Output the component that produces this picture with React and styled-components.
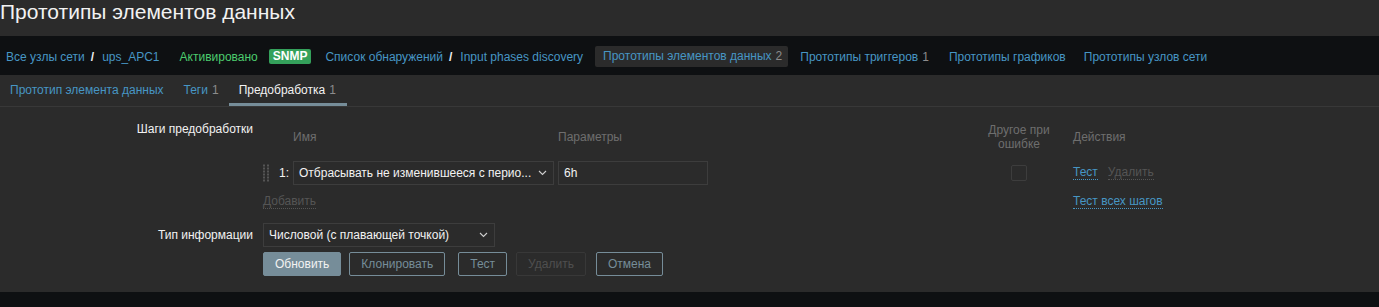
import React from "react";
import styled, { createGlobalStyle } from "styled-components";

const Global = createGlobalStyle`
  html, body { margin: 0; padding: 0; background: #0e1012; }
  body { font-family: "Liberation Sans", Arial, sans-serif; font-size: 12px; color: #f2f2f2; }
  * { box-sizing: border-box; }
`;

const Page = styled.div`
  width: 1379px;
  height: 307px;
  background: #0e1012;
`;

const Header = styled.div`
  height: 36px;
  background: #2b2b2b;
  display: flex;
  align-items: center;
`;

const Title = styled.h1`
  margin: 0;
  font-weight: normal;
  font-size: 21px;
  color: #f2f2f2;
  line-height: 24px;
  margin-top: -12px;
`;

const Nav = styled.div`
  height: 39px;
  background: #0e1012;
  display: flex;
  align-items: center;
  padding: 2px 0 0 6px;
`;

const NavLink = styled.span`
  color: #4796c4;
  margin-right: ${(p) => p.$mr ?? 20}px;
  white-space: nowrap;
  ${(p) =>
    p.$active &&
    `
    background: #2b2b2b;
    padding: 0 6px 0 8px;
    height: 21px;
    line-height: 21px;
    border-radius: 2px;
    margin-left: -8px;
  `}
`;

const Sep = styled.span`
  color: #f2f2f2;
  font-weight: bold;
  margin-right: 8px;
`;

const Status = styled.span`
  color: #4ccc6e;
  margin-right: 11px;
`;

const Badge = styled.span`
  background: #34a15b;
  color: #fff;
  font-weight: bold;
  padding: 1px 4px;
  border-radius: 2px;
  line-height: 13px;
  margin-right: 14px;
`;

const Count = styled.span`
  color: #8c8c8c;
  margin-left: 4px;
`;

const Tabs = styled.div`
  height: 32px;
  background: #2b2b2b;
  display: flex;
  border-bottom: 1px solid #383838;
`;

const Tab = styled.div`
  display: flex;
  align-items: center;
  color: ${(p) => (p.$active ? "#f2f2f2" : "#4796c4")};
  border-bottom: 3px solid ${(p) => (p.$active ? "#768d99" : "transparent")};
  padding-top: 2px;
  padding-left: 10px;
  padding-right: ${(p) => p.$pr ?? 10}px;
`;

const Form = styled.div`
  background: #2b2b2b;
  padding: 15px 0 16px;
  display: grid;
  grid-template-columns: 253px 1fr;
  column-gap: 10px;
`;

const Label = styled.div`
  text-align: right;
  color: #f2f2f2;
  line-height: 14px;
  align-self: ${(p) => p.$align ?? "start"};
  margin-top: ${(p) => p.$mt ?? 0}px;
`;

const StepsGrid = styled.div`
  display: grid;
  grid-template-columns: 30px 265px 150px 277px 68px 20px auto;
  align-items: center;
`;

const Th = styled.div`
  color: #6e6e6e;
  line-height: 14px;
  height: 30px;
  display: flex;
  align-items: center;
  justify-content: ${(p) => (p.$center ? "center" : "flex-start")};
  text-align: ${(p) => (p.$center ? "center" : "left")};
  grid-column: ${(p) => p.$col};
`;

const RowCell = styled.div`
  height: 24px;
  margin-top: 9px;
  display: flex;
  align-items: center;
  grid-column: ${(p) => p.$col};
  justify-content: ${(p) => (p.$center ? "center" : "flex-start")};
`;

const Handle = styled.svg`
  width: 6px;
  height: 18px;
  margin-right: 10px;
`;

const Num = styled.span`
  color: #f2f2f2;
`;

const Select = styled.div`
  width: ${(p) => p.$w}px;
  height: 24px;
  border: 1px solid #3d3d3d;
  background: #2b2b2b;
  display: flex;
  align-items: center;
  padding: 0 6px 0 5px;
  color: #f2f2f2;
  gap: 5px;
`;

const SelectText = styled.span`
  flex: 1;
  min-width: 0;
  white-space: nowrap;
`;

const Input = styled.div`
  width: 150px;
  height: 24px;
  border: 1px solid #3d3d3d;
  display: flex;
  align-items: center;
  padding: 0 5px;
  color: #f2f2f2;
`;

const Checkbox = styled.div`
  width: 16px;
  height: 16px;
  border: 1px solid #3d3d3d;
  border-radius: 2px;
`;

const LinkBtn = styled.span`
  color: ${(p) => (p.$disabled ? "#555555" : "#4796c4")};
  border-bottom: 1px dotted ${(p) => (p.$disabled ? "#555555" : "#4796c4")};
  line-height: 13px;
  margin-right: ${(p) => p.$mr ?? 0}px;
`;

const AddRow = styled.div`
  grid-column: ${(p) => p.$col};
  margin-top: 9px;
  height: 16px;
  display: flex;
  align-items: center;
`;

const TypeRow = styled.div`
  margin-top: 13px;
  display: flex;
  align-items: center;
`;

const Buttons = styled.div`
  display: flex;
  margin-top: 5px;
`;

const Button = styled.button`
  font-family: inherit;
  font-size: 12px;
  height: 24px;
  padding: 0 11px;
  border-radius: 2px;
  margin-right: ${(p) => p.$mr ?? 8}px;
  cursor: pointer;
  ${(p) =>
    p.$primary
      ? `background: #768d99; border: 1px solid #768d99; color: #f2f2f2;`
      : p.$disabled
      ? `background: transparent; border: 1px solid #383838; color: #4f4f4f;`
      : `background: transparent; border: 1px solid #768d99; color: #768d99;`}
`;

const Chevron = () => (
  <svg width="9" height="6" viewBox="0 0 9 6">
    <path d="M1 1l3.5 3.5L8 1" fill="none" stroke="#cfcfcf" strokeWidth="1.1" />
  </svg>
);

const DragDots = () => (
  <Handle viewBox="0 0 6 18">
    {[0, 1, 2, 3, 4, 5].map((r) =>
      [0, 1].map((c) => (
        <rect key={`${r}-${c}`} x={c * 4} y={r * 3 + 0.5} width="2" height="2" fill="#555555" />
      ))
    )}
  </Handle>
);

export default function App() {
  return (
    <Page>
      <Global />
      <Header>
        <Title>Прототипы элементов данных</Title>
      </Header>
      <Nav>
        <NavLink $mr={6}>Все узлы сети</NavLink>
        <Sep>/</Sep>
        <NavLink>ups_APC1</NavLink>
        <Status>Активировано</Status>
        <Badge>SNMP</Badge>
        <NavLink $mr={6}>Список обнаружений</NavLink>
        <Sep>/</Sep>
        <NavLink>Input phases discovery</NavLink>
        <NavLink $active $mr={12}>
          Прототипы элементов данных<Count>2</Count>
        </NavLink>
        <NavLink>
          Прототипы триггеров<Count>1</Count>
        </NavLink>
        <NavLink $mr={18}>Прототипы графиков</NavLink>
        <NavLink>Прототипы узлов сети</NavLink>
      </Nav>
      <Tabs>
        <Tab>Прототип элемента данных</Tab>
        <Tab>
          Теги<Count>1</Count>
        </Tab>
        <Tab $active $pr={11}>
          Предобработка<Count>1</Count>
        </Tab>
      </Tabs>
      <Form>
        <Label>Шаги предобработки</Label>
        <StepsGrid>
          <Th $col="2">Имя</Th>
          <Th $col="3">Параметры</Th>
          <Th $col="5" $center>
            Другое при
            <br />
            ошибке
          </Th>
          <Th $col="7">Действия</Th>

          <RowCell $col="1">
            <DragDots />
            <Num>1:</Num>
          </RowCell>
          <RowCell $col="2">
            <Select $w={261}>
              <SelectText>Отбрасывать не изменившееся с перио...</SelectText>
              <Chevron />
            </Select>
          </RowCell>
          <RowCell $col="3">
            <Input>6h</Input>
          </RowCell>
          <RowCell $col="5" $center>
            <Checkbox />
          </RowCell>
          <RowCell $col="7">
            <LinkBtn $mr={10}>Тест</LinkBtn>
            <LinkBtn $disabled>Удалить</LinkBtn>
          </RowCell>

          <AddRow $col="1 / span 3">
            <LinkBtn $disabled>Добавить</LinkBtn>
          </AddRow>
          <AddRow $col="7">
            <LinkBtn>Тест всех шагов</LinkBtn>
          </AddRow>
        </StepsGrid>

        <Label $align="center" $mt={13}>Тип информации</Label>
        <TypeRow>
          <Select $w={232}>
            <SelectText>Числовой (с плавающей точкой)</SelectText>
            <Chevron />
          </Select>
        </TypeRow>
        <div />
        <Buttons>
          <Button $primary>Обновить</Button>
          <Button $mr={13}>Клонировать</Button>
          <Button $mr={9}>Тест</Button>
          <Button $disabled $mr={10}>Удалить</Button>
          <Button>Отмена</Button>
        </Buttons>
      </Form>
    </Page>
  );
}
